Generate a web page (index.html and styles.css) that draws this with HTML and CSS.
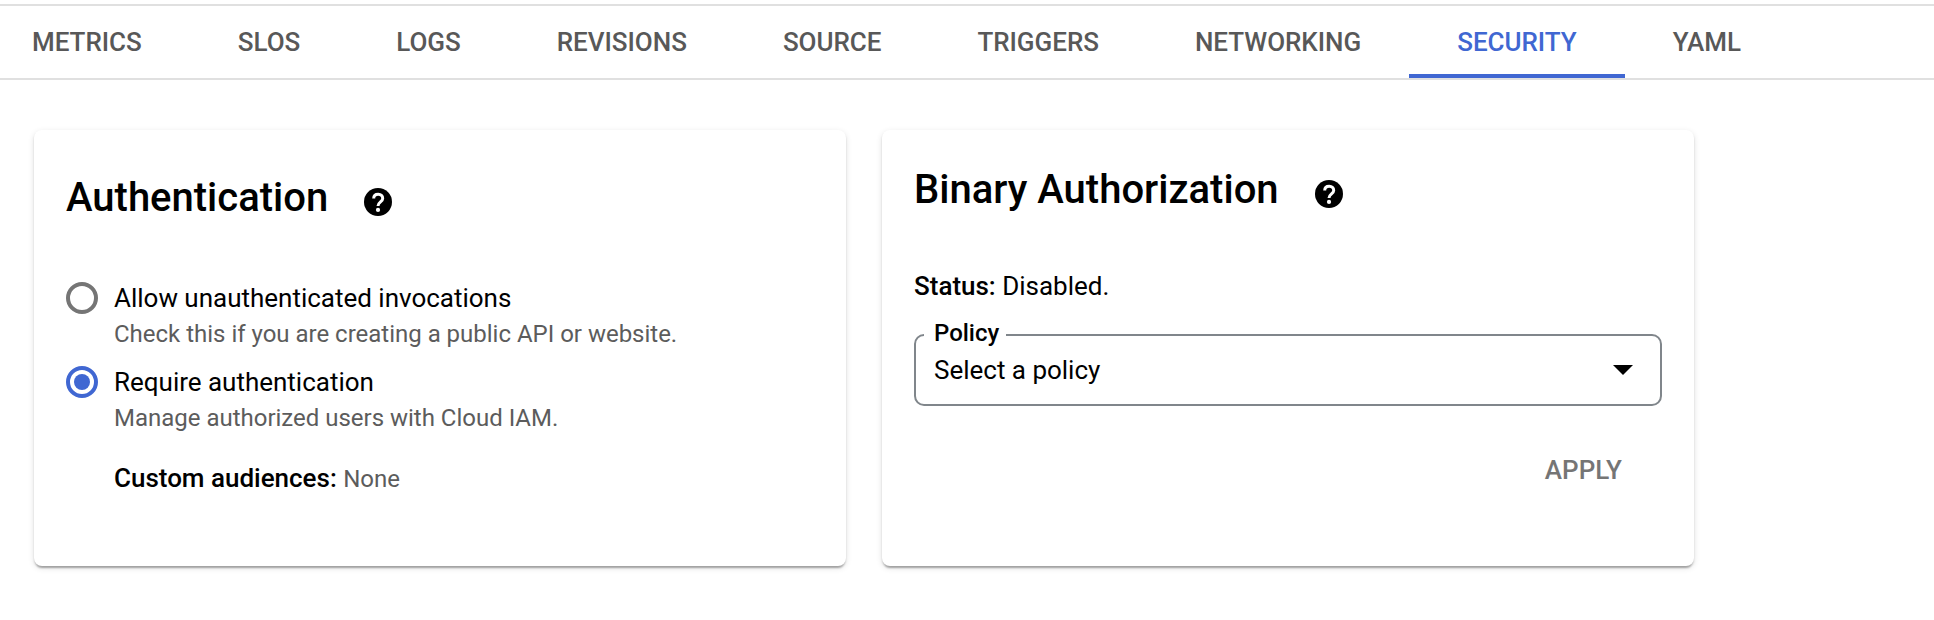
FILE: index.html
```html
<!DOCTYPE html>
<html lang="en">
<head>
<meta charset="utf-8">
<title>Security</title>
<link rel="stylesheet" href="styles.css">
</head>
<body>
<nav class="tabs">
  <a class="tab">METRICS</a>
  <a class="tab">SLOS</a>
  <a class="tab">LOGS</a>
  <a class="tab">REVISIONS</a>
  <a class="tab">SOURCE</a>
  <a class="tab">TRIGGERS</a>
  <a class="tab">NETWORKING</a>
  <a class="tab tab-active">SECURITY</a>
  <a class="tab">YAML</a>
</nav>
<main class="cards">
  <section class="card card-auth">
    <header class="card-header">
      <h2 class="card-title">Authentication</h2>
      <svg class="help" viewBox="0 0 28 28"><circle cx="14" cy="14" r="14"/><path class="help-mark" d="M9.7 10.4C9.7 7.8 11.5 6.2 14.2 6.2s4.5 1.7 4.5 4.2c0 3.4-4.7 3.6-4.7 7.6"/><circle class="help-dot" cx="14" cy="21.9" r="2.1"/></svg>
    </header>
    <div class="options">
      <div class="option">
        <span class="radio"></span>
        <div class="option-body">
          <div class="option-label">Allow unauthenticated invocations</div>
          <div class="option-hint">Check this if you are creating a public API or website.</div>
        </div>
      </div>
      <div class="option">
        <span class="radio radio-checked"></span>
        <div class="option-body">
          <div class="option-label">Require authentication</div>
          <div class="option-hint">Manage authorized users with Cloud IAM.</div>
        </div>
      </div>
    </div>
    <p class="audiences"><b class="strong">Custom audiences:</b> <span class="audiences-value">None</span></p>
  </section>
  <section class="card card-binary">
    <header class="card-header">
      <h2 class="card-title">Binary Authorization</h2>
      <svg class="help" viewBox="0 0 28 28"><circle cx="14" cy="14" r="14"/><path class="help-mark" d="M9.7 10.4C9.7 7.8 11.5 6.2 14.2 6.2s4.5 1.7 4.5 4.2c0 3.4-4.7 3.6-4.7 7.6"/><circle class="help-dot" cx="14" cy="21.9" r="2.1"/></svg>
    </header>
    <p class="status"><b class="strong">Status:</b> Disabled.</p>
    <div class="select">
      <span class="select-label">Policy</span>
      <span class="select-value">Select a policy</span>
      <svg class="caret" viewBox="0 0 20 10"><path d="M0 0h20L10 10z"/></svg>
    </div>
    <div class="actions"><button class="apply">APPLY</button></div>
  </section>
</main>
</body>
</html>
```
FILE: styles.css
```css
* { box-sizing: border-box; }
body {
  min-height: 620px;
  margin: 0;
  padding-top: 4px;
  background: #fff;
  color: #000;
  font: 400 26px/32px Roboto, sans-serif;
  letter-spacing: -0.01px;
}
h2, p { margin: 0; }
.tabs {
  display: flex;
  height: 76px;
  margin-bottom: 50px;
  border-top: 2px solid #e0e0e0;
  border-bottom: 2px solid #e0e0e0;
}
.tab {
  padding: 0 48px;
  border-bottom: 4px solid transparent;
  color: #585858;
  font-weight: 500;
  letter-spacing: -0.03px;
  line-height: 72px;
}
.tab:first-child { padding-left: 32px; }
.tab-active { border-bottom-color: #4067d2; color: #4067d2; }
.cards { display: flex; gap: 36px; padding-left: 34px; }
.card {
  width: 812px;
  height: 436px;
  padding: 0 32px;
  border-radius: 8px;
  background: #fff;
  box-shadow: 0 4px 2px -2px rgba(0,0,0,.2), 0 2px 2px rgba(0,0,0,.14), 0 2px 6px rgba(0,0,0,.12);
}
.card-auth { padding-top: 44px; }
.card-binary { padding-top: 36px; }
.card-header { display: flex; align-items: flex-start; height: 48px; }
.card-title { font-size: 40px; font-weight: 500; letter-spacing: 0; line-height: 48px; }
.help { width: 28px; height: 28px; margin: 14px 0 0 36px; }
.help-mark { fill: none; stroke: #fff; stroke-width: 3; }
.help-dot { fill: #fff; }
.strong { font-weight: 500; }
.options { display: flex; flex-direction: column; gap: 16px; margin-top: 60px; }
.option { display: flex; gap: 16px; }
.radio {
  display: flex;
  align-items: center;
  justify-content: center;
  width: 32px;
  height: 32px;
  border: 4px solid #757575;
  border-radius: 50%;
}
.radio-checked { border-color: #4067d2; }
.radio-checked::after {
  content: "";
  width: 16px;
  height: 16px;
  border-radius: 50%;
  background: #4067d2;
}
.option-body { display: flex; flex-direction: column; gap: 4px; }
.option-hint { color: #5c5c5c; font-size: 24px; }
.audiences { margin: 28px 0 0 48px; }
.audiences-value { color: #5c5c5c; font-size: 24px; }
.status { margin-top: 56px; }
.select {
  position: relative;
  display: flex;
  align-items: center;
  justify-content: space-between;
  height: 72px;
  margin-top: 32px;
  padding: 0 27px 0 18px;
  border: 2px solid #80868b;
  border-radius: 10px;
}
.select-label {
  position: absolute;
  left: 8px;
  top: -19px;
  width: 82px;
  padding-left: 10px;
  background: #fff;
  font-size: 24px;
  font-weight: 500;
}
.caret { width: 20px; height: 10px; }
.actions { display: flex; justify-content: flex-end; margin-top: 48px; padding-right: 40px; }
.apply {
  padding: 0;
  border: 0;
  background: none;
  color: #757575;
  font: 500 26px/32px Roboto, sans-serif;
}
```
